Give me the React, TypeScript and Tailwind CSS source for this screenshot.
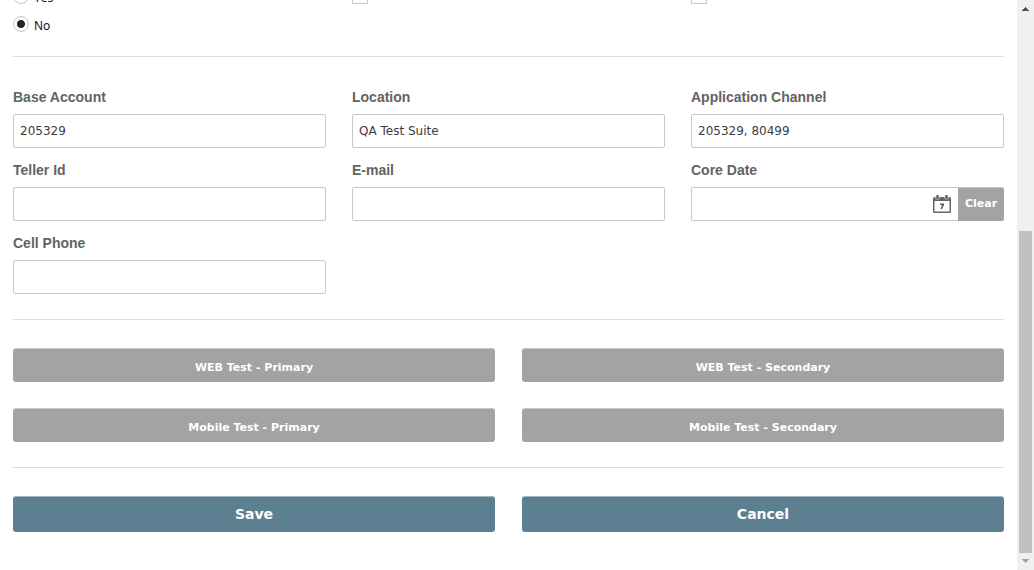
import React, { useState } from "react";

const field =
  "block h-[34px] w-full rounded-[2px] border border-[#c8c8c8] bg-white px-1.5 pb-px text-[12px] text-[#3c3c3c] outline-none focus:border-[#5c7f91]";
const labelText = "mb-[7px] block text-[14px] leading-5 font-bold text-[#636363]";
const verdana = "font-['Verdana','DejaVu_Sans',sans-serif]";

function Field({ id, label, value = "", type = "text" }: { id: string; label: string; value?: string; type?: string }) {
  return (
    <div>
      <label htmlFor={id} className={labelText}>{label}</label>
      <input id={id} type={type} defaultValue={value} className={`${field} ${verdana}`} />
    </div>
  );
}

function RadioOption({ label, checked, onChange }: { label: string; checked: boolean; onChange: () => void }) {
  return (
    <label className="flex h-4 items-center gap-[5px] font-['Open_Sans','Noto_Sans',sans-serif] text-[12px] leading-4 text-black">
      <input
        type="radio"
        name="enabled"
        checked={checked}
        onChange={onChange}
        className="size-4 appearance-none rounded-full border border-[#c8c8c8] bg-white checked:bg-[radial-gradient(circle,#222_0_3.5px,#fff_4.5px)]"
      />
      <span className="pt-[3px]">{label}</span>
    </label>
  );
}

function CalendarIcon() {
  return (
    <svg width="18" height="19" viewBox="0 0 18 19" aria-hidden="true">
      <path d="M1.500 2h15A1.500 1.500 0 0 1 18 3.500v13a1.500 1.500 0 0 1-1.500 1.500h-15A1.500 1.500 0 0 1 0 16.500v-13A1.500 1.500 0 0 1 1.500 2Z" fill="#666" />
      <rect x="1.500" y="6" width="15" height="10.500" rx=".5" fill="#fff" />
      <rect x="2.300" y="0" width="4.400" height="4.600" rx="2" fill="#ddd" />
      <rect x="11.300" y="0" width="4.400" height="4.600" rx="2" fill="#ddd" />
      <rect x="3.200" y="0" width="2.600" height="4" rx="1" fill="#636363" />
      <rect x="12.200" y="0" width="2.600" height="4" rx="1" fill="#636363" />
      <path d="M7 8.500H11V9.900L9 14H7.400l1.900-4H7Z" fill="#555" />
    </svg>
  );
}

const testButton =
  "h-[34px] rounded-[3px] border-t border-[#c8c8c8] bg-[#a3a3a3] pt-[5px] text-[11px] font-bold text-white hover:bg-[#969696]";
const actionButton =
  "h-9 rounded-[3px] border-t border-[#a3b7c1] bg-[#5c7f91] pb-px text-[14px] font-bold text-white hover:bg-[#507182]";

export default function App() {
  const [choice, setChoice] = useState("No");
  const [date, setDate] = useState("");

  return (
    <div className="flex min-h-screen bg-white font-['Liberation_Sans',Arial,sans-serif]">
      <main className="flex-1 overflow-hidden px-[13px]">
        <form className="-mt-3" onSubmit={(e) => e.preventDefault()}>
          <div className="grid grid-cols-3 gap-x-[26px]">
            <div className="flex flex-col gap-3">
              <RadioOption label="Yes" checked={choice === "Yes"} onChange={() => setChoice("Yes")} />
              <RadioOption label="No" checked={choice === "No"} onChange={() => setChoice("No")} />
            </div>
            <input type="checkbox" aria-label="Option 1" className="size-4 appearance-none border border-[#c8c8c8] checked:bg-[#5c7f91]" />
            <input type="checkbox" aria-label="Option 2" className="size-4 appearance-none border border-[#c8c8c8] checked:bg-[#5c7f91]" />
          </div>

          <hr className="mt-6 border-[#dcdcdc]" />

          <div className="mt-[30px] grid grid-cols-3 gap-x-[26px] gap-y-3">
            <Field id="base" label="Base Account" value="205329" />
            <Field id="location" label="Location" value="QA Test Suite" />
            <Field id="channel" label="Application Channel" value="205329, 80499" />
            <Field id="teller" label="Teller Id" />
            <Field id="email" label="E-mail" type="email" />
            <div>
              <label htmlFor="core" className={labelText}>Core Date</label>
              <div className="flex">
                <div className="flex h-[34px] min-w-0 flex-1 items-center rounded-l-[2px] border border-r-0 border-[#c8c8c8] pr-[7px]">
                  <input
                    id="core"
                    value={date}
                    onChange={(e) => setDate(e.target.value)}
                    className={`h-full min-w-0 flex-1 px-1.5 text-[12px] text-[#3c3c3c] outline-none ${verdana}`}
                  />
                  <button type="button" aria-label="Choose date">
                    <CalendarIcon />
                  </button>
                </div>
                <button
                  type="button"
                  onClick={() => setDate("")}
                  className={`h-[34px] w-[46px] rounded-r-[2px] border-t border-[#c8c8c8] bg-[#a3a3a3] text-[11px] font-bold text-white ${verdana}`}
                >
                  Clear
                </button>
              </div>
            </div>
            <Field id="cell" label="Cell Phone" type="tel" />
          </div>

          <hr className="mt-[25px] border-[#dcdcdc]" />

          <div className={`mt-7 grid grid-cols-2 gap-x-[27px] gap-y-[26px] ${verdana}`}>
            <button type="button" className={testButton}>WEB Test - Primary</button>
            <button type="button" className={testButton}>WEB Test - Secondary</button>
            <button type="button" className={testButton}>Mobile Test - Primary</button>
            <button type="button" className={testButton}>Mobile Test - Secondary</button>
          </div>

          <hr className="mt-[25px] border-[#dcdcdc]" />

          <div className={`mt-7 grid grid-cols-2 gap-x-[27px] ${verdana}`}>
            <button type="submit" className={actionButton}>Save</button>
            <button type="button" className={actionButton}>Cancel</button>
          </div>
        </form>
      </main>

      <div className="flex w-[17px] flex-col bg-[#f0f0f0]" aria-hidden="true">
        <svg className="size-[17px]" viewBox="0 0 17 17" shapeRendering="crispEdges">
          <path d="M5 11V10H6V9H7V8H8V7H9V8H10V9H11V10H12V11Z" fill="#505050" />
        </svg>
        <div className="flex flex-1 flex-col justify-end px-0.5">
          <div className="h-[60%] bg-[#c1c1c1]" />
        </div>
        <svg className="size-[17px]" viewBox="0 0 17 17" shapeRendering="crispEdges">
          <path d="M5 6V7H6V8H7V9H8V10H9V9H10V8H11V7H12V6Z" fill="#a3a3a3" />
        </svg>
      </div>
    </div>
  );
}
